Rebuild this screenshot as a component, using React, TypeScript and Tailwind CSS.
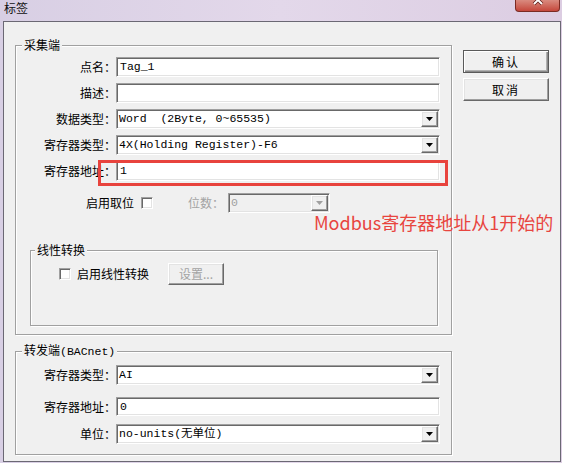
import type { ReactNode } from 'react';

const cjk = "font-['Noto_Sans_CJK_SC',sans-serif]";
const mono = "font-['Liberation_Mono','Noto_Sans_CJK_SC',monospace]";
const sunken =
  'border border-t-[#a0a0a0] border-l-[#a0a0a0] border-r-white border-b-white shadow-[inset_1px_1px_0_#696969,inset_-1px_-1px_0_#e3e3e3]';
const raised =
  'border border-t-white border-l-white border-r-[#696969] border-b-[#696969] shadow-[inset_-1px_-1px_0_#a0a0a0,inset_1px_1px_0_#e3e3e3]';

const Arrow = ({ disabled = false }: { disabled?: boolean }) => (
  <div className={`w-[17px] h-full bg-[#f0f0f0] flex items-center justify-center ${raised}`}>
    <svg width="7" height="4" viewBox="0 0 7 4">
      <path d="M0 0h7L3.5 4z" fill={disabled ? '#a0a0a0' : '#000'} />
    </svg>
  </div>
);

const Field = ({ value, h = 'h-[20px]' }: { value: string; h?: string }) => (
  <div className={`${h} w-[324px] bg-white flex items-center pl-[3px] ${sunken}`}>
    <span className={`${mono} text-[11.5px] leading-[14px] text-black whitespace-pre`}>{value}</span>
  </div>
);

const Select = ({ value }: { value: string }) => (
  <div className={`h-[20px] w-[324px] bg-white flex p-[1px] ${sunken}`}>
    <div className="flex-1 flex items-center pl-[1px]">
      <span className={`${mono} text-[11.5px] leading-[14px] text-black whitespace-pre`}>{value}</span>
    </div>
    <Arrow />
  </div>
);

const Row = ({ label, children, className = '' }: { label: string; children: ReactNode; className?: string }) => (
  <div className={`relative flex items-center ${className}`}>
    <div className={`w-[100px] text-right ${cjk} text-[12px] leading-[14px] text-black`}>{label}</div>
    {children}
  </div>
);

const Check = () => <div className={`w-[12px] h-[12px] bg-white ${sunken}`} />;

const Legend = ({ children, ml = 'ml-[6px]' }: { children: ReactNode; ml?: string }) => (
  <legend className={`${ml} px-[2px] bg-[#f0f0f0] ${cjk} text-[12px] leading-[14px] text-black`}>{children}</legend>
);

const groupBox = 'border border-[#a0a0a0] shadow-[inset_1px_1px_0_#fff,1px_1px_0_#fff]';

export default function App() {
  return (
    <div className="w-[562px] h-[463px] overflow-hidden flex flex-col bg-linear-to-r from-[#d8cfe4] via-[#e3d8ea] to-[#dccde2]">
      {/* Title bar */}
      <div className="h-[21px] flex items-start justify-between">
        <span className={`pl-[4px] pt-[1px] ${cjk} text-[12px] leading-[14px] text-[#111]`}>标签</span>
        <div className="w-[45px] h-[12px] mr-[2px] rounded-b-[4px] border border-t-0 border-[#7a2a22] bg-linear-to-b from-[#d98a7f] to-[#c4463b] flex justify-center overflow-hidden">
          <svg width="14" height="11" viewBox="0 0 14 11">
            <path d="M3 -4L11 4M11 -4L3 4" stroke="#5a1a14" strokeWidth="3.4" />
            <path d="M3 -4L11 4M11 -4L3 4" stroke="#fff" strokeWidth="2" />
          </svg>
        </div>
      </div>

      {/* Dialog body */}
      <div className="relative flex-1 ml-[3px] mr-[1px] mb-[1px] border border-[#6b6874] bg-[#f0f0f0] flex items-start pt-[16px] pl-[11px]">
        <div className="w-[437px] flex flex-col">
          {/* 采集端 */}
          <fieldset className={`${groupBox} pb-[8px]`}>
            <Legend>采集端</Legend>
            <div className="flex flex-col gap-[6px] pt-[5px]">
              <Row label="点名：">
                <Field value="Tag_1" />
              </Row>
              <Row label="描述：">
                <Field value="" />
              </Row>
              <Row label="数据类型：">
                <Select value="Word  (2Byte, 0~65535)" />
              </Row>
              <Row label="寄存器类型：">
                <Select value="4X(Holding Register)-F6" />
              </Row>
              <Row label="寄存器地址：">
                <Field value="1" />
                <div className="absolute left-[82px] top-[-1px] w-[350px] h-[26px] border-[3px] border-[#e8433d]" />
              </Row>
            </div>

            <div className="mt-[12px] h-[20px] flex items-center pl-[70px]">
              <span className={`${cjk} text-[12px] leading-[14px] text-black`}>启用取位</span>
              <div className="ml-[7px]">
                <Check />
              </div>
              <span className={`ml-[35px] ${cjk} text-[12px] leading-[14px] text-[#a3a3a3]`}>位数：</span>
              <div className={`ml-[4px] h-[20px] w-[102px] bg-[#f0f0f0] flex p-[1px] ${sunken}`}>
                <div className="flex-1 flex items-center pl-[1px]">
                  <span className={`${mono} text-[11.5px] leading-[14px] text-[#a0a0a0]`}>0</span>
                </div>
                <Arrow disabled />
              </div>
            </div>

            {/* 线性转换 */}
            <fieldset className={`${groupBox} mt-[30px] ml-[14px] w-[408px] pb-[40px]`}>
              <Legend ml="ml-[4px]">线性转换</Legend>
              <div className="pt-[6px] pl-[28px] h-[28px] flex items-end">
                <div className="h-[22px] flex items-center">
                  <Check />
                  <span className={`ml-[6px] ${cjk} text-[12px] leading-[14px] text-black`}>启用线性转换</span>
                  <div className={`ml-[19px] w-[56px] h-[22px] bg-[#f0f0f0] flex items-center justify-center ${raised}`}>
                    <span className={`${cjk} text-[12px] leading-[14px] text-[#a3a3a3]`}>设置...</span>
                  </div>
                </div>
              </div>
            </fieldset>
          </fieldset>

          {/* 转发端 */}
          <fieldset className={`${groupBox} mt-[8px] pb-[10px]`}>
            <Legend>
              转发端<span className={`${mono} text-[11.5px]`}>(BACnet)</span>
            </Legend>
            <div className="flex flex-col pt-[6px]">
              <Row label="寄存器类型：">
                <Select value="AI" />
              </Row>
              <Row label="寄存器地址：" className="mt-[12px]">
                <Field value="0" h="h-[19px]" />
              </Row>
              <Row label="单位：" className="mt-[8px]">
                <Select value="no-units(无单位)" />
              </Row>
            </div>
          </fieldset>
        </div>

        {/* Buttons */}
        <div className="ml-[11px] mt-[12px] w-[86px] flex flex-col gap-[5px]">
          <button className="h-[23px] border border-[#5a5a5a] bg-[#f0f0f0] shadow-[inset_1px_1px_0_#fff,inset_-1px_-1px_0_#8a8a8a,inset_-2px_-2px_0_#b0b0b0] flex items-center justify-center">
            <span className={`${cjk} text-[12px] leading-[14px] text-black tracking-[2px]`}>确认</span>
          </button>
          <button className={`h-[23px] bg-[#f0f0f0] flex items-center justify-center ${raised}`}>
            <span className={`${cjk} text-[12px] leading-[14px] text-black tracking-[2px]`}>取消</span>
          </button>
        </div>

        {/* Annotation */}
        <div className={`absolute left-[310px] top-[189px] ${cjk} text-[18px] leading-[22px] text-[#e8453f] whitespace-nowrap`}>
          Modbus寄存器地址从1开始的
        </div>
      </div>
    </div>
  );
}
